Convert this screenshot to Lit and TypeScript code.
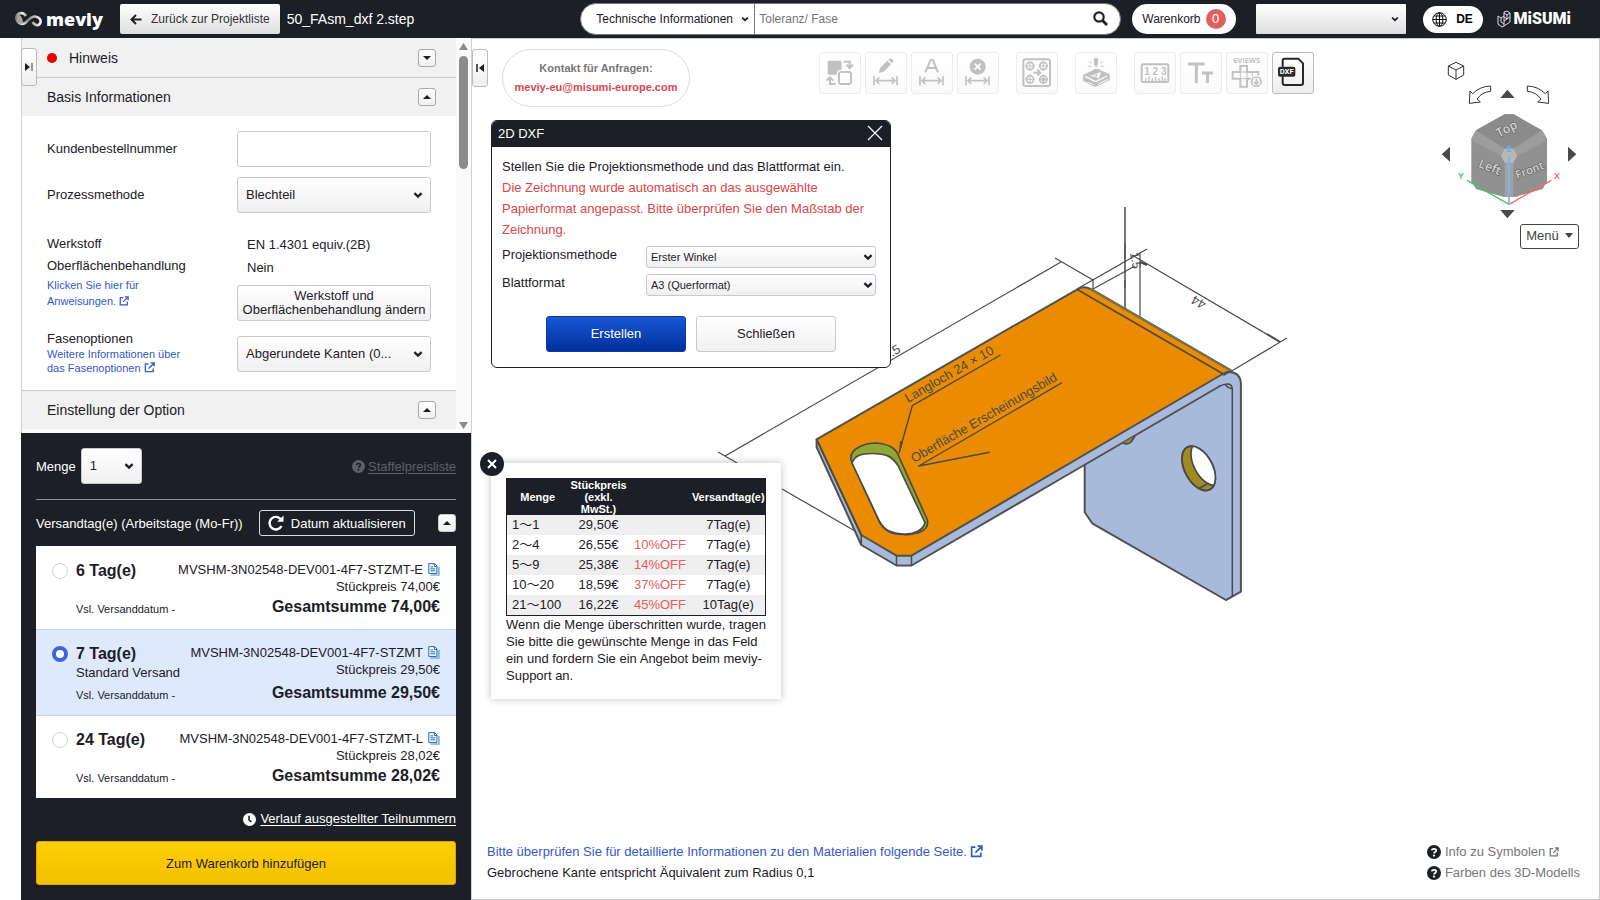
import { LitElement, html, css, svg } from "lit";
import { customElement, state } from "lit/decorators.js";

const chevron = html`<svg class="chev" viewBox="0 0 10 6" aria-hidden="true"><path d="M1.4 1.2 5 4.6 8.6 1.2" fill="none" stroke="currentColor" stroke-width="2.300"/></svg>`;
const external = html`<svg class="ext" viewBox="0 0 12 12" aria-hidden="true"><path d="M5 2H1.5v8.5H10V7M7 1h4v4M11 1 5 7" fill="none" stroke="currentColor" stroke-width="1.5"/></svg>`;
const question = html`<svg class="round" viewBox="0 0 14 14" aria-hidden="true"><circle cx="7" cy="7" r="7" fill="currentColor"/><path d="M4.8 5.4C5 3.4 9.2 3.2 9.2 5.5 9.2 7 7 7 7 8.4" fill="none" stroke="var(--hole)" stroke-width="1.7"/><circle cx="7" cy="10.6" r="1.1" fill="var(--hole)"/></svg>`;
const copyIcon = html`<svg class="copy" viewBox="0 0 36 40" aria-hidden="true"><path d="M33 12v25H7" fill="none" stroke="#7db0de" stroke-width="5"/><path d="M2 2h18l7 7v23H2z" fill="#fff" stroke="#1565b0" stroke-width="3"/><path d="M19 2v9h8M7 12h8M7 18h15M7 24h15" fill="none" stroke="#1565b0" stroke-width="3"/></svg>`;

const dimension = svg`<path d="M27 73v27M96 73v27M32 86h59M43 76 33 86l10 10M80 76l10 10-10 10" fill="none" stroke="currentColor" stroke-width="5"/>`;

const tools = [
  { group: 0, label: "Ansicht tauschen", icon: svg`<rect x="26" y="26" width="42" height="42" rx="5" fill="currentColor"/><rect x="59" y="59" width="38" height="38" rx="6" fill="#fcfcfc" stroke="#fcfcfc" stroke-width="11"/><rect x="60" y="60" width="36" height="36" rx="6" fill="none" stroke="currentColor" stroke-width="6"/><path d="M74 29h18v17M82 38l10 10 10-10M50 96H33V78M23 86l10-10 10 10" fill="none" stroke="currentColor" stroke-width="6"/>` },
  { group: 0, label: "Maß bearbeiten", icon: svg`<path d="m42 63 3-15 22-22 11 11-22 22zM70 23l4-3q4-2 8 2t2 8l-3 4z" fill="currentColor"/>${dimension}` },
  { group: 0, label: "Maßtext", icon: svg`<path d="M43 61 59 23h6l16 38M49 48h26" fill="none" stroke="currentColor" stroke-width="6"/>${dimension}` },
  { group: 0, label: "Maß löschen", icon: svg`<circle cx="62" cy="44" r="24" fill="currentColor"/><path d="m53 35 18 18M71 35 53 53" stroke="#fff" stroke-width="5"/>${dimension}` },
  { group: 1, label: "Bohrungen", icon: svg`<rect x="22" y="22" width="80" height="80" rx="6" fill="none" stroke="currentColor" stroke-width="6"/><g fill="none" stroke="currentColor" stroke-width="5"><circle cx="42" cy="42" r="11"/><circle cx="82" cy="42" r="11"/><circle cx="42" cy="82" r="11"/><circle cx="82" cy="82" r="11"/><circle cx="82" cy="82" r="4"/><path stroke-width="3" d="M42 28v28M28 42h28M82 28v28M68 42h28M42 68v28M28 82h28M82 68v28M68 82h28"/><path stroke-width="6" d="M52 62h20M64 53l9 9-9 9"/></g>` },
  { group: 2, label: "Lasergravur", icon: svg`<path d="m24 69 36-18q5-2 10 0l34 16v17L66 103q-5 3-10 0L24 87z" fill="currentColor"/><path d="m31 74 12 5 15 8 6 1 32-16" fill="none" stroke="#fff" stroke-width="4"/><path d="M30 83v3l25 12M70 97l28-15" stroke="#fff" stroke-width="3"/><path d="m45 73 33-13-7 20-9-6z" fill="#fff"/><path d="m57 71 12-5-3 8-3-2z" fill="currentColor"/><path d="M58 20h10v15l-5 9-5-9zM43 26l7 8M40 43h8M83 26l-7 8M78 43h8" fill="currentColor" stroke="currentColor" stroke-width="3"/>` },
  { group: 3, label: "Messen", icon: svg`<rect x="23" y="37" width="80" height="53" rx="4" fill="none" stroke="currentColor" stroke-width="6"/><path d="M35 88V78M45 88V74M55 88V78M65 88V74M75 88V78M85 88V74M93 88V78" stroke="currentColor" stroke-width="4"/><text x="64" y="69" text-anchor="middle" font-size="30" font-weight="700" fill="currentColor" font-family="Liberation Sans, sans-serif">1 2 3</text>` },
  { group: 3, label: "Textgröße", icon: svg`<path d="M24 36h50M49 36v57M66 63h33M82.500 63v30" stroke="currentColor" stroke-width="9"/>` },
  { group: 3, label: "Sechs Ansichten", icon: svg`<text x="62" y="33" text-anchor="middle" font-size="22" font-weight="700" fill="currentColor" font-family="Open Sans, sans-serif">6VIEWS</text><path d="M43 42h20v18h34v20H63v24H43V80H20V60h23z" fill="none" stroke="currentColor" stroke-width="6"/><path d="M43 60h20v20H43zM79 60v20" fill="none" stroke="currentColor" stroke-width="3"/><circle cx="91" cy="89" r="20" fill="#fcfcfc"/><circle cx="91" cy="89" r="14" fill="none" stroke="currentColor" stroke-width="5"/><path d="M91 80v15M84 90l7 7 7-7" fill="none" stroke="currentColor" stroke-width="5"/>` },
  { group: 3, label: "2D DXF", on: true, icon: svg`<path d="M32 44V26q0-6 6-6h41l14 14v59q0 6-6 6H38q-6 0-6-6V73" fill="none" stroke="#26282b" stroke-width="6"/><rect x="18" y="44" width="52" height="30" rx="6" fill="#26282b"/><text x="44" y="67" text-anchor="middle" font-size="23" font-weight="700" fill="#fff" font-family="Roboto, sans-serif">DXF</text>` },
];

const offers = [
  { days: "6 Tag(e)", id: "MVSHM-3N02548-DEV001-4F7-STZMT-E", unit: "74,00€", std: false },
  { days: "7 Tag(e)", id: "MVSHM-3N02548-DEV001-4F7-STZMT", unit: "29,50€", std: true },
  { days: "24 Tag(e)", id: "MVSHM-3N02548-DEV001-4F7-STZMT-L", unit: "28,02€", std: false },
];

const steps = [
  ["1〜1", "29,50€", "", "7Tag(e)"],
  ["2〜4", "26,55€", "10%OFF", "7Tag(e)"],
  ["5〜9", "25,38€", "14%OFF", "7Tag(e)"],
  ["10〜20", "18,59€", "37%OFF", "7Tag(e)"],
  ["21〜100", "16,22€", "45%OFF", "10Tag(e)"],
];

const shared = css`
  * { box-sizing: border-box; }
  :host { font-family: "Liberation Sans", Arial, "Noto Sans CJK JP", sans-serif; font-size: 13px; color: #1c2026; }
  button, input, select { font: inherit; color: inherit; margin: 0; }
  button { padding: 0; border: 1px solid #c8cacf; border-radius: 3px; background: linear-gradient(#fff, #f0f0f0); }
  a { color: #3558cb; text-decoration: none; }
  p { margin: 0; }
  svg { flex: none; }
  .pick { display: grid; align-items: center; }
  .pick > * { grid-area: 1 / 1; }
  .pick select { appearance: none; width: 100%; height: 36px; padding: 0 30px 2px 8px; border: 1px solid #c8cacf; border-radius: 3px; background: linear-gradient(#fff, #f0f0f0); text-overflow: ellipsis; }
  .chev { justify-self: end; width: 10px; height: 6px; margin-right: 8px; pointer-events: none; }
  .ext { width: 10px; height: 10px; vertical-align: -1px; }
  .round { width: 13px; height: 13px; }
`;

@customElement("top-bar")
class TopBar extends LitElement {
  static styles = [shared, css`
    :host { display: flex; align-items: center; height: 38px; padding: 0 29px 0 14px; background: #1c2026; color: #fff; }
    .brand { display: flex; align-items: center; gap: 3px; width: 106px; }
    .word { font: 800 18px/24px "Open Sans", sans-serif; }
    .back { display: flex; align-items: center; gap: 9px; height: 30px; padding: 0 10px 0 10px; border: 0; border-radius: 2px; background: linear-gradient(#fff, #dedede); color: #333; font-size: 12px; white-space: nowrap; }
    .file { margin-left: 7px; font-size: 14px; white-space: nowrap; }
    .right { display: flex; align-items: center; margin-left: auto; color: #1c2026; font-size: 12px; }
    .search { display: flex; width: 541px; height: 32px; border: 1px solid #777; border-radius: 16px; background: #fff; overflow: hidden; }
    .search .pick { width: 174px; border-right: 1px solid #777; }
    .search select { height: 30px; border: 0; background: none; padding: 0 20px 0 15px; }
    .search .chev { width: 8px; margin-right: 5px; }
    .search input { flex: 1; min-width: 0; border: 0; outline: 0; background: none; padding: 0 4px; }
    .search input::placeholder { color: #757575; }
    .go { display: flex; align-items: center; border: 0; background: none; padding: 0 12px 2px; }
    .cart { display: flex; align-items: center; gap: 5px; height: 30px; margin-left: 11px; padding: 0 10px; border: 0; border-radius: 15px; background: #fff; }
    .count { width: 20px; border-radius: 10px; background: #e06060; color: #fff; font-size: 13px; line-height: 20px; }
    .account { width: 150px; margin-left: 20px; }
    .account select { height: 30px; border: 0; border-radius: 1px; background: linear-gradient(#fff, #dedede); }
    .account .chev { width: 8px; margin-right: 7px; }
    .lang { display: flex; align-items: center; justify-content: center; gap: 9px; width: 60px; height: 27px; margin-left: 17px; border: 0; border-radius: 14px; background: #fff; color: #000; font-weight: 700; }
    .misumi { display: flex; align-items: center; gap: 3px; margin-left: 14px; color: #fff; font: 900 16px/20px Roboto, sans-serif; }
  `];
  render() {
    return html`
      <div class="brand">
        <svg width="29" height="16" viewBox="0 0 29 16"><defs><linearGradient id="m"><stop stop-color="#8d8683"/><stop offset=".25" stop-color="#eee"/><stop offset=".5" stop-color="#8d8683"/><stop offset="1" stop-color="#f4f4f4"/></linearGradient></defs><path d="M12 5C9 0 2 2 2.500 7.500S9 14 12 11.500 15.500 6 20 5.500 28 9 26 12.500 20 13.500 18.500 11" fill="none" stroke="url(#m)" stroke-width="2.600"/><path d="M3.500 5C6 2 9 7 9 13 5 13 2 10 3.500 5z" fill="#aaa4a1"/></svg>
        <span class="word">meviy</span>
      </div>
      <button class="back"><svg width="12" height="11" viewBox="0 0 12 11"><path d="M11.500 5.500H2M6 1 1.500 5.500 6 10" fill="none" stroke="#222" stroke-width="2"/></svg>Zurück zur Projektliste</button>
      <span class="file">50_FAsm_dxf 2.step</span>
      <div class="right">
        <div class="search">
          <div class="pick"><select aria-label="Suchbereich"><option>Technische Informationen</option></select>${chevron}</div>
          <input aria-label="Suche" placeholder="Toleranz/ Fase" />
          <button class="go" aria-label="Suchen"><svg width="15" height="15" viewBox="0 0 15 15"><circle cx="6" cy="6" r="4.700" fill="none" stroke="#1c2026" stroke-width="2.200"/><path d="m9.500 9.500 4.500 4.500" stroke="#1c2026" stroke-width="2.800"/></svg></button>
        </div>
        <button class="cart">Warenkorb <span class="count">0</span></button>
        <div class="pick account"><select aria-label="Konto"><option></option></select>${chevron}</div>
        <button class="lang"><svg width="15" height="15" viewBox="0 0 15 15" fill="none" stroke="#111"><circle cx="7.500" cy="7.500" r="6.800"/><ellipse cx="7.500" cy="7.500" rx="3.400" ry="6.800"/><path d="M7.500 1v13M.7 7.500h13.600M2 4h11M2 11h11"/></svg>DE</button>
        <div class="misumi"><svg width="14" height="18" viewBox="0 0 14 18" fill="none" stroke="#ddd"><path d="m1 6 3 2 3-2v10l-2 1-4-3zM4 8v4l3 2M7 6V2l3-1 3 2v4l-3 2-3-2M10 5v4l-3 2M13 7v5l-6 4M10 5l3-2M10 5 7 3"/></svg>MiSUMi</div>
      </div>`;
  }
}

@customElement("config-panel")
class ConfigPanel extends LitElement {
  static styles = [shared, css`
    :host { display: flex; position: relative; flex: 1; min-height: 0; border: 1px solid #d0d2d6; border-top: 0; border-bottom: 0; background: #fafafa; }
    .list { flex: 1; min-width: 0; overflow: hidden; }
    .bar { display: flex; align-items: center; gap: 12px; height: 38px; padding: 0 20px 0 25px; background: #f1f1f1; font-size: 14px; }
    .bar span { flex: 1; }
    .first { height: 40px; border-bottom: 1px solid #ccc; }
    .last { height: 39px; border-top: 1px solid #ccc; }
    .dot { width: 10px; height: 10px; border-radius: 5px; background: #e90000; }
    .fold { width: 18px; height: 18px; border-color: #aaa; display: grid; place-items: center; }
    .form { display: grid; grid-template-columns: 190px 1fr; align-items: center; padding: 15px 25px; background: #fff; }
    .form > label { padding-bottom: 2px; }
    .form input { width: 100%; height: 36px; border: 1px solid #c8cacf; border-radius: 3px; background: #fff; }
    .form > .method { margin-top: 10px; }
    .form > .stuff { margin-top: 20px; align-self: start; }
    .form > .edge { margin-top: 10px; align-self: start; }
    .stuff p { line-height: 22px; }
    .stuff a { display: block; font-size: 11px; line-height: 16px; width: 110px; }
    .values p { line-height: 23px; padding-left: 10px; }
    .change { width: 100%; height: 36px; margin-top: 6px; line-height: 14px; }
    .edge label { display: block; line-height: 16px; }
    .edge a { display: block; width: 140px; font-size: 11px; line-height: 14px; }
    .edge .ext { width: 11px; height: 11px; }
    .edge .pick { margin-top: 5px; }
    .scroll { display: flex; flex-direction: column; align-items: center; width: 15px; padding: 5px 0 4px; }
    .thumb { width: 9px; height: 113px; margin-top: 6px; border-radius: 5px; background: #8b8b8b; }
    .down { margin-top: auto; }
    .handle { position: absolute; left: -1px; top: 10px; width: 16px; height: 38px; border-color: #bbb; display: grid; place-items: center; }
  `];
  fold(open: boolean) {
    return html`<button class="fold" aria-label="Abschnitt umschalten"><svg width="8" height="4" viewBox="0 0 8 4"><path d=${open ? "M0 4 4 0l4 4z" : "M0 0h8L4 4z"} fill="#1c2026"/></svg></button>`;
  }
  render() {
    return html`
      <div class="list">
        <div class="bar first"><i class="dot"></i><span>Hinweis</span>${this.fold(false)}</div>
        <div class="bar"><span>Basis Informationen</span>${this.fold(true)}</div>
        <div class="form">
          <label for="order">Kundenbestellnummer</label>
          <input id="order" />
          <label class="method" for="method">Prozessmethode</label>
          <div class="pick method"><select id="method"><option>Blechteil</option></select>${chevron}</div>
          <div class="stuff">
            <p>Werkstoff</p><p>Oberflächenbehandlung</p>
            <a href="#">Klicken Sie hier für Anweisungen. ${external}</a>
          </div>
          <div class="stuff values">
            <p>EN 1.4301 equiv.(2B)</p><p>Nein</p>
            <button class="change">Werkstoff und<br />Oberflächenbehandlung ändern</button>
          </div>
          <div class="edge">
            <label for="edge">Fasenoptionen</label>
            <a href="#">Weitere Informationen über das Fasenoptionen ${external}</a>
          </div>
          <div class="edge"><div class="pick"><select id="edge"><option>Abgerundete Kanten (0...</option></select>${chevron}</div></div>
        </div>
        <div class="bar last"><span>Einstellung der Option</span>${this.fold(true)}</div>
      </div>
      <div class="scroll">
        <svg width="9" height="7" viewBox="0 0 9 7"><path d="M0 7 4.500 0 9 7z" fill="#8b8b8b"/></svg>
        <div class="thumb"></div>
        <svg class="down" width="9" height="7" viewBox="0 0 9 7"><path d="M0 0h9L4.500 7z" fill="#8b8b8b"/></svg>
      </div>
      <button class="handle" aria-label="Leiste öffnen"><svg width="8" height="8" viewBox="0 0 8 8"><path d="m0 0 5 4-5 4z" fill="#1c2026"/><path d="M7 0v8" stroke="#777" stroke-width="1.500"/></svg></button>`;
  }
}

@customElement("price-panel")
class PricePanel extends LitElement {
  @state() selected = 1;
  static styles = [shared, css`
    :host { display: block; margin-right: 1px; padding: 15px; background: #1c2026; color: #fff; box-shadow: 1px 0 #d0d2d6; }
    .row { display: flex; align-items: center; }
    .amount { gap: 5px; padding-bottom: 15px; border-bottom: 1px solid #8d9094; }
    .amount .pick { width: 61px; color: #1c2026; }
    .steps { display: flex; align-items: center; gap: 3px; margin-left: auto; color: #5d6166; --hole: #1c2026; }
    .steps u, .history u { text-underline-offset: 2px; }
    .ship { justify-content: space-between; padding: 10px 0; }
    .update { display: flex; align-items: center; justify-content: center; gap: 7px; width: 156px; height: 26px; margin-left: -7px; border-color: #ddd; background: none; }
    .fold { width: 18px; height: 18px; display: grid; place-items: center; }
    .offer { display: grid; grid-template-columns: 24px 1fr auto; padding: 14px 16px 12px; border-bottom: 1px solid #d0d2d6; background: #fff; color: #1c2026; line-height: 17px; }
    .offer:first-child { padding-top: 15px; }
    .offer:last-child { border: 0; }
    .offer.on { background: #dee9fd; }
    .offer input { appearance: none; width: 16px; height: 16px; margin: 2px 0 0; border: 1px solid #cfd1d6; border-radius: 8px; background: #fff; }
    .offer input:checked { border: 4px solid #4263db; }
    .term { display: flex; flex-direction: column; }
    .term b { font-size: 16px; line-height: 20px; }
    .term small { margin-top: auto; font-size: 11px; line-height: 15px; }
    .cost { display: flex; flex-direction: column; align-items: flex-end; }
    .part { display: flex; align-items: center; gap: 5px; }
    .copy { width: 12px; height: 13px; }
    .cost b { margin-top: 2px; font-size: 16px; line-height: 20px; }
    .on .cost b { margin-top: 5px; }
    .history { display: flex; align-items: center; justify-content: flex-end; gap: 4px; margin: 13px 0 14px; color: #fff; line-height: 16px; }
    .buy { width: 100%; height: 44px; border-color: #d9a900; background: linear-gradient(#ffcd05, #f2c200); color: #1c2026; }
  `];
  render() {
    return html`
      <div class="row amount">
        <label for="qty">Menge</label>
        <div class="pick"><select id="qty"><option>1</option></select>${chevron}</div>
        <a class="steps" href="#">${question}<u>Staffelpreisliste</u></a>
      </div>
      <div class="row ship">
        <span>Versandtag(e) (Arbeitstage (Mo-Fr))</span>
        <button class="update"><svg width="16" height="16" viewBox="0 0 16 16"><path d="M13.500 11A6.300 6.300 0 1 1 13 4.500" fill="none" stroke="#fff" stroke-width="2.400"/><path d="M15.500.5v6.300H9.200z" fill="#fff"/></svg>Datum aktualisieren</button>
        <button class="fold" aria-label="Versandtage umschalten"><svg width="8" height="4" viewBox="0 0 8 4"><path d="M0 4 4 0l4 4z" fill="#1c2026"/></svg></button>
      </div>
      <div class="offers">
        ${offers.map((o, i) => html`
          <label class="offer ${i === this.selected ? "on" : ""}">
            <input type="radio" name="term" .checked=${i === this.selected} @change=${() => (this.selected = i)} />
            <span class="term"><b>${o.days}</b>${o.std ? html`<span>Standard Versand</span>` : ""}<small>Vsl. Versanddatum -</small></span>
            <span class="cost"><span class="part">${o.id}${copyIcon}</span><span>Stückpreis ${o.unit}</span><b>Gesamtsumme ${o.unit}</b></span>
          </label>`)}
      </div>
      <a class="history" href="#"><svg width="13" height="13" viewBox="0 0 14 14"><circle cx="7" cy="7" r="7" fill="#fff"/><path d="M6.500 3v4.500l2.500 2" fill="none" stroke="#1c2026" stroke-width="1.700"/></svg><u>Verlauf ausgestellter Teilnummern</u></a>
      <button class="buy">Zum Warenkorb hinzufügen</button>`;
  }
}

@customElement("dxf-dialog")
class DxfDialog extends LitElement {
  static styles = [shared, css`
    :host { display: block; width: 400px; border: 1px solid #1c2026; border-radius: 6px; background: #fff; overflow: hidden; }
    header { display: flex; align-items: center; justify-content: space-between; height: 26px; padding: 0 7px 2px 6px; background: #1c2026; color: #fff; }
    .close { display: flex; border: 0; background: none; }
    .body { padding: 9px 14px 15px 10px; line-height: 21px; }
    .warn { color: #e04545; }
    .field { display: grid; grid-template-columns: 144px 1fr; height: 28px; align-items: start; }
    .first { margin-top: 6px; }
    .field label { line-height: 18px; }
    .pick select { height: 22px; padding: 0 20px 0 4px; font-size: 11px; }
    .pick .chev { width: 10px; margin-right: 3px; }
    .actions { display: flex; gap: 10px; margin: 14px 0 0 44px; }
    .actions button { width: 140px; height: 36px; padding-bottom: 2px; }
    .actions .go { border-color: #0b3aa6; background: linear-gradient(#1957d6, #00309a); color: #fff; }
  `];
  render() {
    return html`
      <header>2D DXF<button class="close" aria-label="Dialog schließen"><svg width="16" height="16" viewBox="0 0 16 16"><path d="m1 1 14 14M15 1 1 15" stroke="#fff" stroke-width="1.200"/></svg></button></header>
      <div class="body">
        <p>Stellen Sie die Projektionsmethode und das Blattformat ein.</p>
        <p class="warn">Die Zeichnung wurde automatisch an das ausgewählte Papierformat angepasst. Bitte überprüfen Sie den Maßstab der Zeichnung.</p>
        <div class="field first"><label for="proj">Projektionsmethode</label><div class="pick"><select id="proj"><option>Erster Winkel</option></select>${chevron}</div></div>
        <div class="field"><label for="sheet">Blattformat</label><div class="pick"><select id="sheet"><option>A3 (Querformat)</option></select>${chevron}</div></div>
        <div class="actions"><button class="go">Erstellen</button><button>Schließen</button></div>
      </div>`;
  }
}

@customElement("step-prices")
class StepPrices extends LitElement {
  static styles = [shared, css`
    :host { display: block; width: 290px; padding: 15px; background: #fff; box-shadow: 0 0 8px rgba(0, 0, 0, .25); line-height: 17px; }
    table { width: 100%; table-layout: fixed; border-collapse: collapse; border: 1px solid #1c2026; }
    th { height: 36px; padding: 0; background: #1c2026; color: #fff; font-size: 11px; line-height: 12px; }
    .c1 { width: 62px; } .c2 { width: 60px; } .c3 { width: 63px; }
    td { height: 20px; padding: 0; text-align: center; line-height: 18px; }
    td:first-child { padding-left: 5px; text-align: left; }
    tbody tr:nth-child(odd) { background: #efefef; }
    .off { color: #e85c5c; }
    .close { position: absolute; left: -11px; top: -11px; display: grid; place-items: center; width: 24px; height: 24px; border: 0; border-radius: 12px; background: #1c2026; }
  `];
  render() {
    return html`
      <table>
        <thead><tr><th class="c1">Menge</th><th class="c2">Stückpreis (exkl. MwSt.)</th><th class="c3"></th><th>Versandtag(e)</th></tr></thead>
        <tbody>${steps.map((r) => html`<tr><td>${r[0]}</td><td>${r[1]}</td><td class="off">${r[2]}</td><td>${r[3]}</td></tr>`)}</tbody>
      </table>
      <p>Wenn die Menge überschritten wurde, tragen Sie bitte die gewünschte Menge in das Feld ein und fordern Sie ein Angebot beim meviy-Support an.</p>
      <button class="close" aria-label="Preisliste schließen"><svg width="10" height="10" viewBox="0 0 10 10"><path d="m1 1 8 8M9 1 1 9" stroke="#fff" stroke-width="2"/></svg></button>`;
  }
}

@customElement("part-view")
class PartView extends LitElement {
  static styles = [shared, css`
    :host { display: block; position: relative; flex: 1; min-width: 0; border: 1px solid #c9cbd0; border-left: 0; background: #fff; }
    .handle { position: absolute; left: 0; top: 10px; width: 16px; height: 38px; border-color: #bbb; display: grid; place-items: center; }
    .contact { position: absolute; left: 30px; top: 10px; width: 188px; height: 58px; padding-top: 9px; border: 1px solid #ddd; border-radius: 29px; text-align: center; font-size: 11px; font-weight: 700; line-height: 19px; color: #777; }
    .contact a { display: block; color: #d9474f; }
    .tools { position: absolute; left: 347px; top: 13px; display: flex; gap: 17px; }
    .set { display: flex; gap: 4px; }
    .set button { width: 42px; height: 42px; border-color: #ededed; background: linear-gradient(#fff, #fafafa); color: #c1c1c1; }
    .set button.on { border-color: #bbb; background: linear-gradient(#fff, #eee); }
    .set svg { display: block; width: 40px; height: 40px; }
    .model { position: absolute; left: 239px; top: 161px; }
    .cube { position: absolute; right: 0; top: 11px; }
    .menu { position: absolute; right: 20px; top: 185px; display: flex; align-items: center; justify-content: center; gap: 6px; width: 59px; height: 25px; padding-bottom: 2px; border: 1px solid #444; background: #fff; color: #444; }
    dxf-dialog { position: absolute; left: 19px; top: 81px; }
    step-prices { position: absolute; left: 19px; top: 424px; }
    .notes { position: absolute; left: 15px; bottom: 16px; line-height: 21px; }
    .notes .ext { width: 13px; height: 13px; vertical-align: -2px; }
    .help { position: absolute; right: 19px; bottom: 16px; line-height: 21px; --hole: #fff; }
    .help a { display: flex; align-items: center; gap: 4px; color: #777; }
    .help .round { width: 14px; height: 14px; color: #1c2026; }
  `];
  render() {
    return html`
      ${this.model()}
      <div class="contact">Kontakt für Anfragen:<a href="#">meviy-eu@misumi-europe.com</a></div>
      <div class="tools">${[0, 1, 2, 3].map((g) => html`<div class="set">${tools.filter((t) => t.group === g).map((t) => html`<button class=${t.on ? "on" : ""} aria-label=${t.label}><svg viewBox="3 3 120 120">${t.icon}</svg></button>`)}</div>`)}</div>
      ${this.cube()}
      <button class="menu">Menü <svg width="8" height="5" viewBox="0 0 8 5"><path d="M0 0h8L4 5z" fill="#444"/></svg></button>
      <button class="handle" aria-label="Leiste schließen"><svg width="8" height="8" viewBox="0 0 8 8"><path d="M8 0 3 4l5 4z" fill="#1c2026"/><path d="M1 0v8" stroke="#1c2026" stroke-width="1.500"/></svg></button>
      <dxf-dialog></dxf-dialog>
      <step-prices></step-prices>
      <div class="notes">
        <p><a href="#">Bitte überprüfen Sie für detaillierte Informationen zu den Materialien folgende Seite. ${external}</a></p>
        <p>Gebrochene Kante entspricht Äquivalent zum Radius 0,1</p>
      </div>
      <div class="help"><a href="#">${question}<span>Info zu Symbolen ${external}</span></a><a href="#">${question}Farben des 3D-Modells</a></div>`;
  }
  model() {
    return html`<svg class="model" width="590" height="410" viewBox="711 200 590 410" fill="none" stroke="#4a4a4a" stroke-width="1.200" stroke-linejoin="round" role="img" aria-label="3D-Modell">
      <defs><clipPath id="hole"><ellipse cx="1198.700" cy="468.300" rx="14" ry="24" transform="rotate(-28 1198.700 468.300)"/></clipPath></defs>
      <path d="M1125 207v103" stroke="#777" stroke-width="2"/>
      <path d="M1140 253v66M718 452l19 11M782 489l80 46M725 456 1061 262M1055 258l38 22v10M1077 289l70-40M1093 289l42-23M1132 255l148 87M1287 338l-57 34M1125 243v16M1125 280v8" />
      <path d="M1140 262l7 3M1280 342l-13-8" stroke-width="2"/>
      <g stroke-width="2" stroke="#505050">
        <path d="M1084.700 465v47.300l7.500 11L1225.900 600l15-8.300V383q-1-11-12-11L1084 455z" fill="#a8badb"/>
        <path d="M816.600 439.300V447L861.300 545l35.200 20.500h15L1050 485l173.300-101V374L911 555z" fill="#a8badb" stroke="none"/>
        <path d="M816.600 439.300V447L861.300 545l35.200 20.500h15L1050 485l170-99"/>
        <path d="M816.600 439.300 1077.300 289.300q6-4 14 0L1231.700 371q-5 .5-9 3L911.500 555.700h-15L861.300 535z" fill="#eb8c00"/>
      </g>
      <path d="M816.600 439.300 861.300 535v10M896.500 556v9.500M911.500 556v9.500M1077.300 289.500 1223.300 374" stroke-width="1.500"/>
      <path d="M1090 288.500 1231 370.500" stroke="#757150" stroke-width="2.500"/>
      <path d="M1219 386.500q12-6 13.300 2V597M1225 384q2 4 7 4.500" stroke-width="1.500"/>
      <g stroke-width="1.700">
        <path d="M851 460c-2-12 15-17 25-17 12 1 20 4 23.500 15L927 519c4 13-13 16-24 15.500-11-.5-18-3-23.500-12.500z" fill="#8fa832"/>
        <path d="M852 463c3-8 10-9.500 20-9.500 15 0 20 3 26 12l27 57c-2 9-13 12-22 11.500-11-.5-18-3-23.500-12.500z" fill="#fff"/>
        <path d="M1123 443q5 2 8-1l4-6" fill="#a08b22"/>
        <ellipse cx="1198.700" cy="468.300" rx="14" ry="24" transform="rotate(-28 1198.700 468.300)" fill="#a08b22"/>
        <g clip-path="url(#hole)"><ellipse cx="1207.700" cy="463.300" rx="14" ry="24" transform="rotate(-28 1207.700 463.300)" fill="#fff"/><path d="M1198 489l9-5"/></g>
        <ellipse cx="1198.700" cy="468.300" rx="14" ry="24" transform="rotate(-28 1198.700 468.300)"/>
      </g>
      <path d="M1000.500 355 912.300 405.700 899 453M1062 382.700 918.700 466l71-13.700" stroke-width="1.400"/>
      <path d="M899 455l1-14 3 1z" fill="#4a4a4a" stroke="none"/>
      <g fill="#4a4a4a" stroke="none" font-family="Liberation Sans, sans-serif" font-size="13">
        <text transform="translate(908 403) rotate(-30)">Langloch 24 × 10</text>
        <text transform="translate(914 463) rotate(-30)">Oberfläche Erscheinungsbild</text>
        <text transform="translate(892 357) rotate(-30)">.5</text>
        <text transform="translate(1207 302) rotate(210)">44</text>
        <text transform="translate(1130 253) rotate(80)" font-size="12">1.5</text>
      </g>
    </svg>`;
  }
  cube() {
    return html`<svg class="cube" width="189" height="170" viewBox="0 0 567 510" fill="none" aria-label="Ansichtswürfel" role="img">
      <g stroke="#333" stroke-width="3" stroke-linejoin="round">
        <path d="m138 37 23 11v27l-23 13-23-13V48zM115 48l23 12 23-12M138 60v28"/>
        <path d="M242 108v16q-26 2-41 23l10 9-33 4 2-37 8 8q22-22 54-23zM352 108v16q26 2 41 23l-10 9 33 4-2-37-8 8q-22-22-54-23z"/>
      </g>
      <path d="m271 144 21-25 22 25zM271 480h43l-22 25zM120 290v45l-25-22zM474 290v45l25-22z" fill="#4a4a4a"/>
      <path d="M284 193h27l85 48 15 25v128l-14 23-84 24h-29l-84-24-16-23V266l14-25z" fill="#919191"/>
      <path d="M184 394l14 23 86 24h27l86-24 14-23-90 46h-32z" fill="#919191"/>
      <path d="m284 193h27l83 48-82 53q-14-9-30 0l-84-53z" fill="#8b8b8b"/>
      <path d="m184 266 14-25 86 55-10 22-76-40zM411 266l-15-25-85 55 11 22 76-40z" fill="#9d9d9d"/>
      <path d="M284 338h26v102h-26z" fill="#a2a2a2"/>
      <path d="m297 295 14 2 11 20-12 21h-26l-11-21 10-20z" fill="#b7b7b7"/>
      <g fill="#d0d0d0" stroke="#686868" stroke-width="4" paint-order="stroke" font-family="Open Sans, sans-serif" font-weight="600" font-size="37">
        <text transform="translate(266 263) rotate(-27)">Top</text>
        <text transform="translate(203 350) rotate(22)">Left</text>
        <text transform="translate(322 388) rotate(-22)" font-size="34">Front</text>
      </g>
      <path d="M171 391 297 463" stroke="#3ecb5c" stroke-width="4"/><path d="m297 463 127-72" stroke="#f76868" stroke-width="4"/>
      <path d="M297 318v145" stroke="#7ab4f5" stroke-width="5"/>
      <g font-family="Liberation Sans, sans-serif" font-weight="700" font-size="26"><text x="144" y="388" fill="#3ecb5c">Y</text><text x="432" y="388" fill="#f76868">X</text><text x="289" y="306" fill="#6aacf5">Z</text></g>
    </svg>`;
  }
}

@customElement("app-root")
class AppRoot extends LitElement {
  static styles = css`
    :host { display: flex; flex-direction: column; height: 100vh; background: #fff; }
    .work { display: flex; flex: 1; min-height: 0; }
    .side { display: flex; flex-direction: column; flex: none; width: 451px; margin-left: 21px; }
  `;
  render() {
    return html`
      <top-bar></top-bar>
      <div class="work">
        <div class="side"><config-panel></config-panel><price-panel></price-panel></div>
        <part-view></part-view>
      </div>`;
  }
}
